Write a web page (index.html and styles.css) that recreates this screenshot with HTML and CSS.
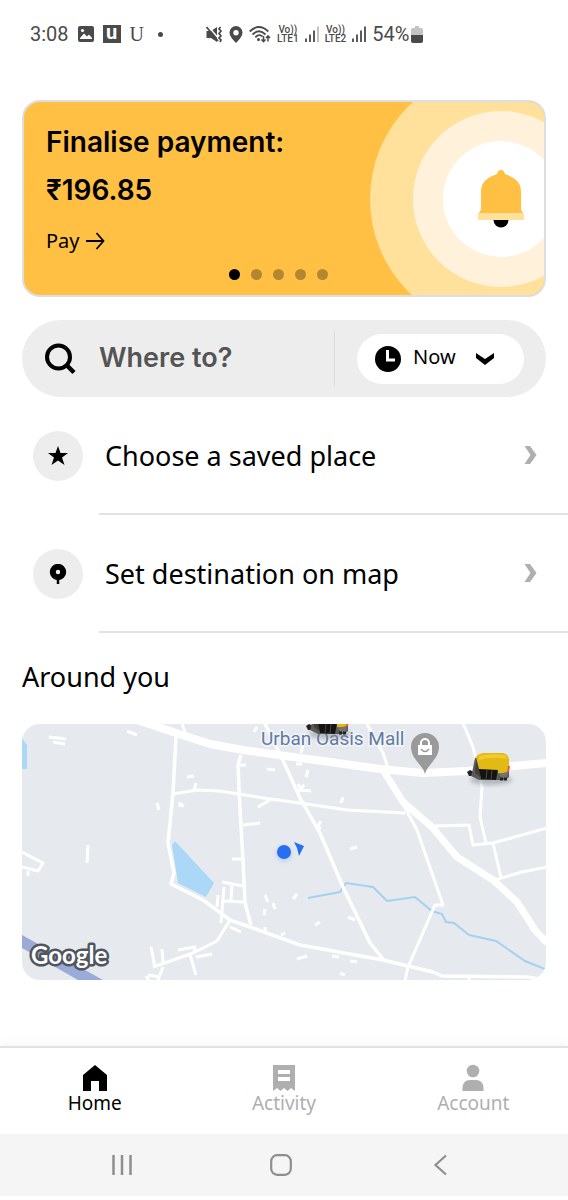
FILE: index.html
```html
<!DOCTYPE html>
<html lang="en">
<head>
    <meta charset="UTF-8">
    <meta name="viewport" content="width=device-width, initial-scale=1.0">
    <title>Ride Home</title>
    <link rel="stylesheet" href="styles.css">
</head>
<body>
    <header class="status-bar">
        <div class="status-group">
            <span class="status-time">3:08</span>
            <svg width="16" height="16" viewBox="0 0 16 16">
                <rect width="16" height="16" rx="2" fill="#4a4a4a"/>
                <path d="M2 12 L6 7.500 L9 10.500 L11 8.500 L14 12 V13 H2 Z" fill="#fff"/>
                <circle cx="4.500" cy="4.500" r="1.600" fill="#fff"/>
            </svg>
            <span class="status-box">u</span>
            <span class="status-serif">U</span>
            <span class="status-dot"></span>
        </div>
        <div class="status-group status-right">
            <svg width="17" height="17" viewBox="0 0 17 17">
                <path d="M0.500 5 H5 L11 1 V16 L5 12 H0.500 Z" fill="#4a4a4a"/>
                <path d="M2 0 L13 13" stroke="#fff" stroke-width="1.500"/>
                <path d="M0.500 1 L12 15" stroke="#4a4a4a" stroke-width="1.800"/>
                <path d="M14.500 1 l-1.500 2 2 2 -2 2.500 2 2.500 -2 2 2 2 -1 2" fill="none" stroke="#4a4a4a" stroke-width="1.700"/>
            </svg>
            <svg width="14" height="17" viewBox="0 0 14 17">
                <path fill-rule="evenodd" d="M7 0 A6.500 6.500 0 0 1 13.500 6.500 C13.500 10 10 14 7 17 C4 14 0.500 10 0.500 6.500 A6.500 6.500 0 0 1 7 0 Z M7 4 A2.700 2.700 0 1 0 7 9.400 A2.700 2.700 0 1 0 7 4 Z" fill="#4a4a4a"/>
            </svg>
            <svg width="22" height="17" viewBox="0 0 22 17">
                <g fill="none" stroke="#4a4a4a" stroke-width="1.800">
                    <path d="M0.700 5.500 Q10 -3.500 19.300 5.500"/>
                    <path d="M3.500 8.500 Q10 2 16.500 8.500"/>
                    <path d="M6.300 11.300 Q10 7.500 13.500 10.500"/>
                </g>
                <circle cx="9.500" cy="13.500" r="1.500" fill="#4a4a4a"/>
                <path d="M14.500 10 V15.500 M12.500 13.500 L14.500 15.700 L16.500 13.500 M19 15.500 V10 M17 12 L19 9.800 L21 12" fill="none" stroke="#4a4a4a" stroke-width="1.500"/>
            </svg>
            <span class="volte"><span>Vo))</span><span>LTE1</span></span>
            <svg width="14" height="16" viewBox="0 0 14 16">
                <path d="M1 12.500 V16 M5 8.500 V16 M9 4.500 V16" stroke="#4a4a4a" stroke-width="1.800"/>
                <path d="M13 0.500 V16" stroke="#bdbdbd" stroke-width="1.800"/>
            </svg>
            <span class="volte"><span>Vo))</span><span>LTE2</span></span>
            <svg width="14" height="16" viewBox="0 0 14 16">
                <path d="M1 12.500 V16 M5 8.500 V16 M9 4.500 V16 M13 0.500 V16" stroke="#4a4a4a" stroke-width="1.800"/>
            </svg>
            <span class="battery">
                54%
                <svg width="12" height="17" viewBox="0 0 12 17">
                    <path d="M4 0 H8 V2 H10.500 Q12 2 12 3.500 V9 H0 V3.500 Q0 2 1.500 2 H4 Z" fill="#c4c4c4"/>
                    <path d="M0 9 H12 V15 Q12 17 10 17 H2 Q0 17 0 15 Z" fill="#4a4a4a"/>
                </svg>
            </span>
        </div>
    </header>

    <main class="content">
        <section class="promo">
            <svg class="promo-art" width="176" height="193" viewBox="0 0 176 193">
                <circle cx="133" cy="97" r="131" fill="#ffe19c"/>
                <circle cx="133" cy="97" r="88" fill="#fff1da"/>
                <circle cx="133" cy="97" r="58" fill="#fff"/>
                <path d="M133 68 C135 68 136.500 69.500 137 72 C145 75 153 79 153 89 V107 Q153 109 156 112 H110 Q113 109 113 107 V89 C113 79 121 75 129 72 C129.500 69.500 131 68 133 68 Z" fill="#ffc043"/>
                <rect x="110" y="111" width="46" height="7" fill="#ffe19c"/>
                <path d="M125.500 118 H140.500 A7.500 7.500 0 0 1 125.500 118 Z" fill="#000"/>
            </svg>
            <h1>Finalise payment:<br>₹196.85</h1>
            <a class="pay" href="#">Pay
                <svg width="19" height="18" viewBox="0 0 19 18">
                    <path d="M0 9 H17 M10.500 1 L17.500 9 L10.500 17" fill="none" stroke="#000" stroke-width="1.800"/>
                </svg>
            </a>
            <div class="dots">
                <span class="dot active"></span>
                <span class="dot"></span>
                <span class="dot"></span>
                <span class="dot"></span>
                <span class="dot"></span>
            </div>
        </section>

        <form class="search">
            <svg width="32" height="32" viewBox="0 0 32 32">
                <circle cx="14.500" cy="14" r="11.500" fill="none" stroke="#000" stroke-width="4"/>
                <path d="M22 21.500 L30 29.500" stroke="#000" stroke-width="4.500"/>
            </svg>
            <input class="search-input" type="text" placeholder="Where to?" aria-label="Where to?">
            <label class="when">
                <svg width="26" height="26" viewBox="0 0 26 26">
                    <circle cx="13" cy="13" r="13" fill="#000"/>
                    <path d="M12.500 4 V14 H20" fill="none" stroke="#fff" stroke-width="3"/>
                </svg>
                <select class="when-select" aria-label="Pickup time">
                    <option>Now</option>
                </select>
                <svg width="18" height="13" viewBox="0 0 18 13">
                    <path d="M0 1 L9 7 L18 1 V6 L9 13 L0 6 Z" fill="#000"/>
                </svg>
            </label>
        </form>

        <nav class="places">
            <a class="place" href="#">
                <span class="place-icon">
                    <svg width="20" height="20" viewBox="0 0 20 20">
                        <path d="M10 0 L12.500 7 H20 L14 11.500 L16.500 19 L10 14.500 L3.500 19 L6 11.500 L0 7 H7.500 Z"/>
                    </svg>
                </span>
                <span class="place-text">Choose a saved place
                    <svg width="13" height="18" viewBox="0 0 13 18">
                        <path d="M0.500 0 H6 L12.500 9 L6 18 H0.500 L6.500 9 Z" fill="#afafaf"/>
                    </svg>
                </span>
            </a>
            <a class="place" href="#">
                <span class="place-icon">
                    <svg width="20" height="20" viewBox="0 0 20 20">
                        <circle cx="10" cy="8" r="5.200" fill="none" stroke="#000" stroke-width="6"/>
                        <path d="M10 15 V20" stroke="#000" stroke-width="2.500"/>
                    </svg>
                </span>
                <span class="place-text">Set destination on map
                    <svg width="13" height="18" viewBox="0 0 13 18">
                        <path d="M0.500 0 H6 L12.500 9 L6 18 H0.500 L6.500 9 Z" fill="#afafaf"/>
                    </svg>
                </span>
            </a>
        </nav>

        <h2>Around you</h2>
        <svg class="map" viewBox="0 0 524 256">
            <defs>
                <filter id="soft" x="-30%" y="-30%" width="160%" height="160%">
                    <feGaussianBlur stdDeviation="2"/>
                </filter>
                <g id="rickshaw">
                    <ellipse cx="24" cy="27" rx="21" ry="5" fill="#7d828a" opacity="0.500" filter="url(#soft)"/>
                    <path d="M0 19 L3 17 L7 19 L6 23 H2 Z" fill="#222"/>
                    <path d="M5 20 L8 5 L14 3 L42 14 L42 24 L38 27 L12 27 L4 23 Z" fill="#5c5b58"/>
                    <path d="M8 17 L10 5 L13 7 L13 24 L8 20 Z" fill="#3f3f3c"/>
                    <path d="M12 16 H31 L29 27 L14 26 Z" fill="#141414"/>
                    <path d="M20 17 L19 26 M25 17 L24 27" stroke="#4c4738" stroke-width="1"/>
                    <path d="M9 4 Q11 1 16 0 L36 0 Q41 1 42 6 L42 17 Q41 20 36 20 L31 20 L31 17 L12 16 Z" fill="#e3b916"/>
                    <path d="M12 3 Q24 0 38 2 L40 6 Q25 3 12 7 Z" fill="#f2cb2d"/>
                    <path d="M41 13 L43 13 L42 19 L40 20 Z" fill="#ef5443"/>
                    <path d="M31 20 L37 20 L41 19 L40 25 L35 25 Z" fill="#737373"/>
                    <path d="M33 26 H40" stroke="#222" stroke-width="3" stroke-dasharray="3 1"/>
                </g>
            </defs>
            <rect width="524" height="256" fill="#e6eaef"/>

            <!-- water -->
            <path d="M153 117 L192 159 L184 173 L156 159 L150 121 Z M0 14 L5 21 V45 H0 Z" fill="#abd8f6"/>
            <path d="M0 211 L81 256 H56 L0 224 Z" fill="#9aabd8"/>
            <path d="M286 174 L318 168 L324 159 L351 163 L365 177 L393 173 L410 187 L420 190 L424 198 L432 199 L447 211 L474 217 L503 237 L523 245" fill="none" stroke="#a3d2ef" stroke-width="2"/>

            <!-- roads -->
            <g fill="none" stroke="#fff" stroke-linejoin="round">
                <path stroke-width="8" d="M115 -4 L160 11 L188 20 L221 26 L278 34 L308 38 L358 45 L401 49 L445 47 L491 42 L525 39"/>
                <path stroke-width="7" d="M361 46 L381 78 L410 103 L435 133 L471 156 L495 178 L513 206 L525 219"/>
                <path stroke-width="3.500" d="M154 13 L151 69 L146 119 L152 149 L149 160 L181 176 L208 196 L228 203 L278 221 L361 236 L411 248 L420 252 L505 253 L524 256"/>
                <path stroke-width="3.500" d="M219 31 L216 41 L218 86 L221 136 L223 179 L229 201"/>
                <path stroke-width="3" d="M151 70 L175 66 L198 67 L248 75 L278 79 L325 86 L383 89"/>
                <path stroke-width="3.500" d="M243 0 L259 32 L278 74 L298 109 L321 163 L348 219 L361 235"/>
                <path stroke-width="3" d="M345 0 L361 29 L366 44"/>
                <path stroke-width="3" d="M381 80 L395 106 L421 181 L413 181 L386 243 L383 256"/>
                <path stroke-width="3" d="M441 -1 L451 23 L460 63 L458 93 L464 119"/>
                <path stroke-width="3" d="M413 102 L447 101 L451 121 L471 119 L525 104 M471 119 L479 154 M473 156 L500 148 L525 143"/>
                <path stroke-width="3" d="M0 128 L21 139 L16 147 L0 143 M6 147 V152"/>
                <path stroke-width="3" d="M208 196 L195 217 L171 229 L131 243 M141 243 L136 256 M129 223 L133 243 M140 225 L141 239 M168 231 L174 251 M156 226 L173 223 L172 229 M174 233 L190 230 M126 251 L138 253 M208 203 L219 208 M124 252 L127 257"/>
                <path stroke-width="3" d="M200 158 L221 162 M210 160 L209 177 M201 177 L223 178 M202 163 L199 199 M196 171 L195 183"/>
                <path stroke-width="3" d="M210 135 H221 M221 101 L238 99 M236 83 L248 76 M218 41 H224 M245 45 L253 46 M165 53 L172 52 M172 66 L174 59 M135 79 L137 86 M66 121 L65 139 M27 13 L44 15 M31 18 L43 20 M105 7 L115 11 M160 0 L163 8 M157 80 L162 82 M158 78 V83"/>
                <path stroke-width="3" d="M243 171 L246 178 M243 185 L242 191 M251 179 L253 185 M243 203 V208 M259 211 L263 209 M271 175 L275 170 M235 3 L232 8 M281 21 L279 29 M274 40 H280 M286 46 L284 53 M276 60 L280 67 M282 61 L276 68 M278 66 L289 67 M321 73 L319 79 M299 97 L295 103 L299 104"/>
                <path stroke-width="3" d="M328 125 L335 123 M293 201 L298 198 M326 193 L333 196 M275 235 L285 232 M310 232 L317 233 M328 237 L335 238 M318 249 L323 251 M447 253 V256"/>
            </g>

            <text class="map-label" x="239" y="21">Urban Oasis Mall</text>

            <!-- mall pin -->
            <path d="M403 50 C401 41 389 35 389 23 A14 14 0 0 1 417 23 C417 35 405 41 403 50 Z" fill="#9a9a9a"/>
            <path d="M396 21 H410 V31 H396 Z" fill="#fff"/>
            <path d="M399 21 V19 A4 4 0 0 1 407 19 V21" fill="none" stroke="#fff" stroke-width="2"/>
            <path d="M399 25 Q403 30 407 25" fill="none" stroke="#9a9a9a" stroke-width="1.500"/>

            <use href="#rickshaw" x="445" y="29"/>
            <use href="#rickshaw" x="284" y="-17"/>

            <!-- current position -->
            <circle cx="262" cy="130" r="8" fill="#9dbdf2" opacity="0.500" filter="url(#soft)"/>
            <circle cx="262" cy="128" r="7" fill="#276ef1"/>
            <path d="M272 118 L282 122 L277 132 L275 124 Z" fill="#276ef1"/>

            <text class="map-brand" x="9" y="240">Google</text>
        </svg>
    </main>

    <nav class="tabs">
        <a class="tab active" href="#">
            <svg width="26" height="27" viewBox="0 0 26 27">
                <path d="M13 1 L25 11 V27 H17 V17 H9 V27 H1 V11 Z" fill="#000"/>
            </svg>
            Home
        </a>
        <a class="tab" href="#">
            <svg width="26" height="27" viewBox="0 0 26 27">
                <path fill-rule="evenodd" d="M2 1 H24 V27 L20 24 L16.500 27 L13 24 L9.500 27 L6 24 L2 27 Z M7 6 V10 H19 V6 Z M7 13 V17 H19 V13 Z" fill="#afafaf"/>
            </svg>
            Activity
        </a>
        <a class="tab" href="#">
            <svg width="26" height="27" viewBox="0 0 26 27">
                <circle cx="13" cy="7" r="6.300" fill="#afafaf"/>
                <path d="M2.500 27 V24 Q3 16 10 16 H16 Q23 16 23.500 24 V27 Z" fill="#afafaf"/>
            </svg>
            Account
        </a>
    </nav>

    <div class="system-nav">
        <button type="button" aria-label="Recent apps">
            <svg width="22" height="22" viewBox="0 0 22 22">
                <path d="M2.500 1 V21 M11 1 V21 M19.500 1 V21" stroke="#8e8e8e" stroke-width="2.500"/>
            </svg>
        </button>
        <button type="button" aria-label="Home screen">
            <svg width="22" height="22" viewBox="0 0 22 22">
                <rect x="1.200" y="1.200" width="19.600" height="19.600" rx="6" fill="none" stroke="#8e8e8e" stroke-width="2.200"/>
            </svg>
        </button>
        <button type="button" aria-label="Back">
            <svg width="22" height="22" viewBox="0 0 22 22">
                <path d="M17 1.500 L6.500 11 L17 20.500" fill="none" stroke="#8e8e8e" stroke-width="2.200"/>
            </svg>
        </button>
    </div>
</body>
</html>
```
FILE: styles.css
```css
* {
    box-sizing: border-box;
}
body {
    margin: 0;
    padding-bottom: 4px;
    min-height: 100vh;
    display: flex;
    flex-direction: column;
    font-family: "Noto Sans", sans-serif;
    background-color: #fff;
    color: #000;
}
svg {
    display: block;
    flex: none;
}
a {
    color: inherit;
    text-decoration: none;
}
h1, h2 {
    margin: 0;
}

/* status bar */
.status-bar {
    display: flex;
    align-items: center;
    gap: 43px;
    height: 68px;
    padding: 0 30px;
    font-family: Roboto, sans-serif;
    font-size: 20px;
    color: #4a4a4a;
}
.status-group {
    display: flex;
    align-items: center;
    gap: 9px;
}
.status-right {
    gap: 6px;
}
.status-box {
    width: 18px;
    height: 18px;
    background-color: #4a4a4a;
    color: #fff;
    font-weight: bold;
    line-height: 15px;
    text-align: center;
}
.status-serif {
    font-family: "Liberation Serif", serif;
}
.status-dot {
    width: 5px;
    height: 5px;
    margin-left: 5px;
    border-radius: 50%;
    background-color: #4a4a4a;
}
.volte {
    display: flex;
    flex-direction: column;
    align-items: center;
    font-size: 10px;
    line-height: 9px;
    font-weight: 500;
}
.battery {
    display: flex;
    align-items: center;
    gap: 2px;
}

.content {
    flex: 1;
    padding: 32px 22px 0;
}

/* payment card */
.promo {
    position: relative;
    height: 197px;
    padding: 16px 22px 0;
    border: 2px solid #dedede;
    border-radius: 18px;
    background-color: #ffc043;
    overflow: hidden;
}
.promo-art {
    position: absolute;
    top: 0;
    right: 0;
}
h1 {
    font-family: Inter, sans-serif;
    font-size: 28px;
    line-height: 48px;
    font-weight: 600;
}
.pay {
    display: inline-flex;
    align-items: center;
    gap: 6px;
    margin-top: 13px;
    font-size: 20px;
    line-height: 28px;
}
.dots {
    display: flex;
    justify-content: center;
    gap: 11px;
    margin-top: 14px;
    padding-right: 12px;
}
.dot {
    width: 11px;
    height: 11px;
    border-radius: 50%;
    background-color: #b3872f;
}
.dot.active {
    background-color: #000;
}

/* search */
.search {
    display: flex;
    align-items: center;
    height: 77px;
    margin-top: 23px;
    padding: 0 22px;
    border-radius: 39px;
    background-color: #ededed;
}
.search-input {
    flex: 1;
    min-width: 0;
    height: 56px;
    margin-right: 22px;
    padding: 0 0 2px 23px;
    border: none;
    border-right: 1px solid #dedede;
    background: none;
    font-family: Inter, sans-serif;
    font-size: 27px;
    font-weight: 600;
}
.search-input::placeholder {
    color: #545454;
    opacity: 1;
}
.when {
    display: flex;
    align-items: center;
    width: 167px;
    height: 50px;
    padding-left: 18px;
    border-radius: 25px;
    background-color: #fff;
}
.when-select {
    width: 75px;
    padding: 0 0 4px 12px;
    border: none;
    background: none;
    appearance: none;
    font-family: "Noto Sans", sans-serif;
    font-size: 20px;
    color: #000;
}

/* shortcuts */
.places {
    margin: 0 -22px;
}
.place {
    display: flex;
    align-items: center;
    padding-left: 33px;
}
.place-icon {
    display: flex;
    align-items: center;
    justify-content: center;
    width: 50px;
    height: 50px;
    margin-right: 16px;
    border-radius: 50%;
    background-color: #ededed;
}
.place-text {
    flex: 1;
    display: flex;
    align-items: center;
    justify-content: space-between;
    height: 118px;
    padding: 0 31px 0 6px;
    border-bottom: 2px solid #e2e2e2;
    font-size: 27px;
}
h2 {
    padding: 24px 0 27px;
    font-size: 27px;
    line-height: 40px;
    font-weight: 400;
}

/* map */
.map {
    width: 100%;
    border-radius: 18px;
}
.map-label {
    font-family: Roboto, sans-serif;
    font-size: 19px;
    fill: #6479a0;
    stroke: #f2f5f9;
    stroke-width: 3px;
    paint-order: stroke;
}
.map-brand {
    font-family: Lato, sans-serif;
    font-size: 24px;
    font-weight: 700;
    fill: #fff;
    stroke: #50555e;
    stroke-width: 5px;
    stroke-linejoin: round;
    paint-order: stroke;
}

/* bottom bars */
.tabs {
    display: grid;
    grid-template-columns: repeat(3, 1fr);
    height: 88px;
    padding-top: 16px;
    border-top: 2px solid #e2e2e2;
    box-shadow: 0 -4px 10px rgba(0, 0, 0, 0.03);
}
.tab {
    display: flex;
    flex-direction: column;
    align-items: center;
    font-size: 19px;
    line-height: 24px;
    color: #afafaf;
}
.tab.active {
    color: #000;
}
.system-nav {
    display: grid;
    grid-template-columns: repeat(3, 1fr);
    height: 62px;
    padding: 0 48px 0 42px;
    background-color: #f5f5f5;
}
.system-nav button {
    display: flex;
    align-items: center;
    justify-content: center;
    padding: 0;
    border: none;
    background: none;
}
```
